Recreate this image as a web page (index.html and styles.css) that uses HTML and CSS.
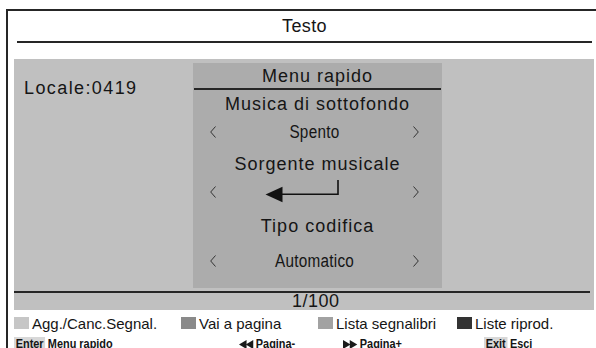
FILE: index.html
```html
<!DOCTYPE html>
<html lang="it">

<head>
    <meta charset="UTF-8">
    <title>Testo</title>
    <link rel="stylesheet" href="styles.css">
</head>

<body>
    <div class="frame">
        <div class="title">Testo</div>

        <div class="screen">
            <div class="screen-body">
                <div class="locale">Locale:0419</div>

                <div class="panel">
                    <div class="panel-head">Menu rapido</div>

                    <div class="item r28">Musica di sottofondo</div>
                    <div class="value r28">
                        <svg class="chev" width="6" height="12" viewBox="0 0 6 12"><polyline points="5.5,0.5 0.7,6 5.5,11.5" /></svg>
                        <span class="val">Spento</span>
                        <svg class="chev right" width="6" height="12" viewBox="0 0 6 12"><polyline points="0.5,0.5 5.3,6 0.5,11.5" /></svg>
                    </div>

                    <div class="item r36">Sorgente musicale</div>
                    <div class="value r24">
                        <svg class="chev up" width="6" height="12" viewBox="0 0 6 12"><polyline points="5.5,0.5 0.7,6 5.5,11.5" /></svg>
                        <svg class="enter-arrow" width="90" height="24" viewBox="0 0 90 24">
                            <polyline points="16,12.2 73,12.2 73,-2" />
                            <polygon points="0.5,12.5 17.5,4.8 17.5,20.2" />
                        </svg>
                        <svg class="chev right up" width="6" height="12" viewBox="0 0 6 12"><polyline points="0.5,0.5 5.3,6 0.5,11.5" /></svg>
                    </div>

                    <div class="item r40">Tipo codifica</div>
                    <div class="value r30">
                        <svg class="chev" width="6" height="12" viewBox="0 0 6 12"><polyline points="5.5,0.5 0.7,6 5.5,11.5" /></svg>
                        <span class="val">Automatico</span>
                        <svg class="chev right" width="6" height="12" viewBox="0 0 6 12"><polyline points="0.5,0.5 5.3,6 0.5,11.5" /></svg>
                    </div>
                </div>
            </div>

            <div class="page">1/100</div>
        </div>

        <!-- colour keys -->
        <div class="legend">
            <div class="key"><span class="sq light"></span>Agg./Canc.Segnal.</div>
            <div class="key"><span class="sq mid"></span>Vai a pagina</div>
            <div class="key"><span class="sq pale"></span>Lista segnalibri</div>
            <div class="key"><span class="sq dark"></span>Liste riprod.</div>
        </div>

        <div class="hints">
            <div class="hint"><span class="btn">Enter</span>Menu rapido</div>
            <div class="hint">
                <svg class="tri" width="18" height="9" viewBox="0 0 18 9"><polygon points="0,4.5 9,0 9,9" /><polygon points="8,4.5 17,0 17,9" /></svg>Pagina-
            </div>
            <div class="hint">
                <svg class="tri" width="18" height="9" viewBox="0 0 18 9"><polygon points="0,0 9,4.5 0,9" /><polygon points="8,0 17,4.5 8,9" /></svg>Pagina+
            </div>
            <div class="hint"><span class="btn">Exit</span>Esci</div>
        </div>
    </div>
</body>

</html>
```

FILE: styles.css
```css
/* Page */

body {
    margin: 0;
    background: #ffffff;
    color: #151515;
    font-family: "Liberation Sans", Arial, sans-serif;
    overflow: hidden;
    height: 348px;
}

.frame {
    margin: 9px 0 0 6px;
    width: 600px;
    border-top: 2px solid #262626;
    border-left: 2px solid #262626;
}

/* Title bar */

.title {
    margin: 0 0 0 9px;
    width: 575px;
    height: 30px;
    line-height: 30px;
    font-size: 18px;
    letter-spacing: 0.4px;
    text-align: center;
    border-bottom: 2px solid #262626;
}

/* Grey screen */

.screen {
    margin: 16px 0 0 6px;
    width: 580px;
    height: 251px;
    background: #c0c0c0;
}

.screen-body {
    display: flex;
    padding-top: 4px;
}

.locale {
    width: 169px;
    padding: 14px 0 0 10px;
    font-size: 18px;
    line-height: 22px;
    letter-spacing: 1.4px;
}

.panel {
    width: 249px;
    height: 225px;
    background: #acacac;
    font-size: 18px;
    letter-spacing: 1px;
}

.panel-head {
    height: 23px;
    padding-top: 2px;
    line-height: 22px;
    text-align: center;
    border-bottom: 2px solid #262626;
    margin-right: 1px;
    margin-left: 1px;
}

.item {
    text-align: center;
}

.r24 { height: 24px; line-height: 24px; }
.r28 { height: 28px; line-height: 28px; }
.r30 { height: 30px; line-height: 30px; }
.r36 { height: 36px; line-height: 36px; }
.r40 { height: 40px; line-height: 40px; }

.value {
    display: grid;
    grid-template-columns: 1fr auto 1fr;
    align-items: center;
    padding: 0 23px 0 17px;
}

/* narrow lettering of the option values */
.val {
    display: inline-block;
    letter-spacing: 0.3px;
    transform: scaleX(0.85);
}

.chev {
    fill: none;
    stroke: #333;
    stroke-width: 1;
}

.chev.right {
    justify-self: end;
}

.chev.up {
    margin-bottom: 5px;
}

.enter-arrow {
    overflow: visible;
    margin-left: -9px;
}

.enter-arrow polyline {
    fill: none;
    stroke: #111;
    stroke-width: 1.6;
}

.enter-arrow polygon {
    fill: #111;
}

.page {
    margin: 3px 0 0 0;
    width: 298px;
    height: 17px;
    padding-left: 278px;
    line-height: 17px;
    border-top: 2px solid #262626;
    font-size: 18px;
    letter-spacing: 0.5px;
}

/* Colour keys */

.legend {
    display: grid;
    grid-template-columns: 167px 137px 139px auto;
    padding: 3px 0 0 6px;
    height: 20px;
    font-size: 15px;
}

.key {
    display: flex;
    align-items: center;
    line-height: 19px;
}

.sq {
    width: 15px;
    height: 12px;
    margin-right: 3px;
}

.sq.light { background: #c6c6c6; }
.sq.mid { background: #8a8a8a; }
.sq.pale { background: #a2a2a2; }
.sq.dark { background: #333333; }

/* Key hints */

.hints {
    display: grid;
    grid-template-columns: 225px 104px 141px auto;
    padding: 4px 0 0 6px;
    font-weight: bold;
    font-size: 13px;
}

.hint {
    display: flex;
    align-items: center;
    line-height: 14px;
    transform: scaleX(0.84);
    transform-origin: left center;
}

.btn {
    background: #d8d8d8;
    padding: 0 2px;
    margin-right: 3px;
}

.tri {
    fill: #1a1a1a;
    margin-right: 2px;
}
```
